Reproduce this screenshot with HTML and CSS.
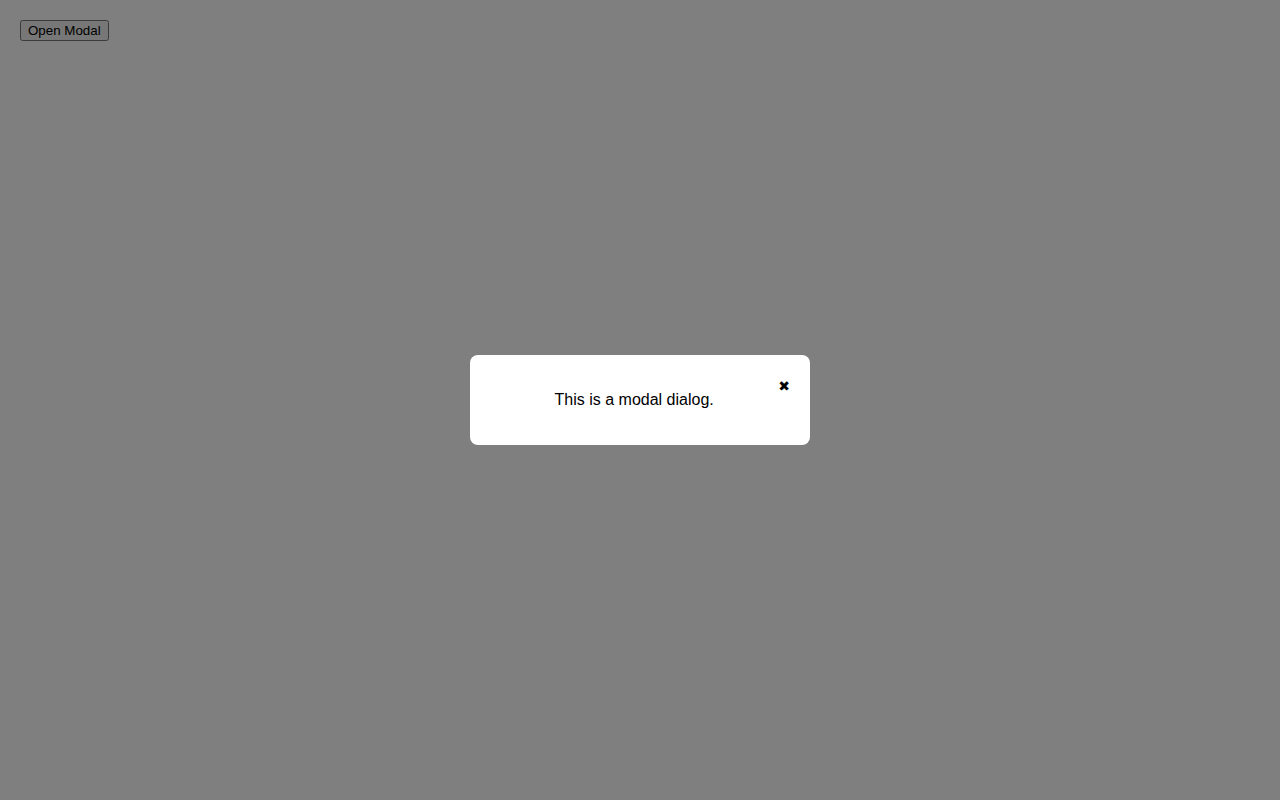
FILE: index.html
```html
<!DOCTYPE html>
<html lang="en">
<head>
<meta charset="utf-8">
<title>Modal</title>
<link rel="stylesheet" href="styles.css">
</head>
<body>
<button class="open-btn">Open Modal</button>
<div class="overlay">
  <div class="modal">
    <span class="close">&#10006;</span>
    <p class="message">This is a modal dialog.</p>
  </div>
</div>
</body>
</html>
```
FILE: styles.css
```css
html, body {
  height: 100%;
}
body {
  margin: 0;
  padding: 20px;
  box-sizing: border-box;
  font-family: "Liberation Sans", Arial, sans-serif;
  background: #ffffff;
}
.open-btn {
  font-family: "Liberation Sans", Arial, sans-serif;
  font-size: 13.333px;
}
.overlay {
  position: fixed;
  inset: 0;
  background: rgba(0, 0, 0, 0.5);
  display: flex;
  align-items: center;
  justify-content: center;
}
.modal {
  background: #ffffff;
  width: 300px;
  padding: 20px;
  border-radius: 8px;
  text-align: center;
}
.close {
  float: right;
  font-size: 14px;
  margin-top: 3px;
  cursor: pointer;
  font-family: "DejaVu Sans", sans-serif;
}
.message {
  margin: 16px 0;
  font-size: 16px;
}
```
